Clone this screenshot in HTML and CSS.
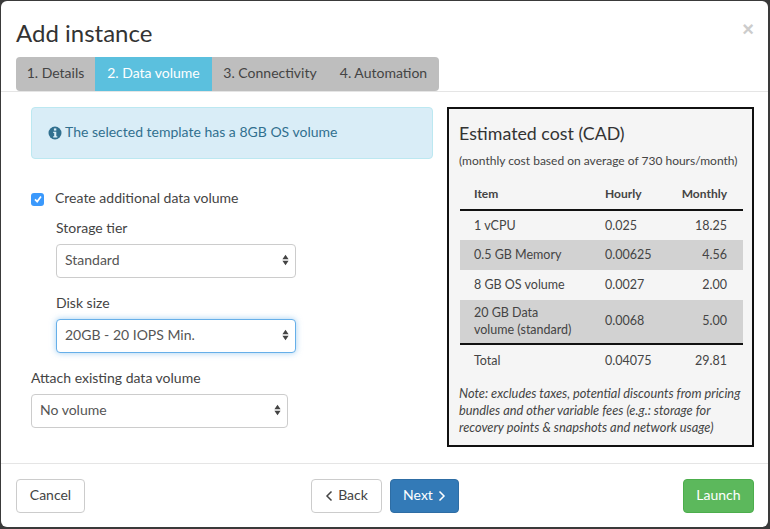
FILE: index.html
```html
<!DOCTYPE html>
<html lang="en">

<head>
    <meta charset="UTF-8">
    <title>Add instance</title>
    <link rel="stylesheet" href="styles.css">
</head>

<body>
    <div class="modal">
        <header class="modal-header">
            <div class="title-row">
                <h1>Add instance</h1>
                <button class="close">×</button>
            </div>
            <ul class="steps">
                <li class="step-1">1. Details</li>
                <li class="step-2 active">2. Data volume</li>
                <li class="step-3">3. Connectivity</li>
                <li class="step-4">4. Automation</li>
            </ul>
        </header>
        <main class="modal-body">
            <section class="form-col">
                <div class="alert">
                    <svg class="info-icon" viewBox="0 0 14 14" width="14" height="14">
                        <circle cx="7" cy="7" r="6.5" fill="#31708f" />
                        <rect x="5.9" y="2.4" width="2.4" height="2.2" fill="#d9edf7" />
                        <path d="M5.2 5.7h3.1v4.5h1v1.3H5.2v-1.3h1V7H5.2z" fill="#d9edf7" />
                    </svg>
                    <span class="alert-text">The selected template has a 8GB OS volume</span>
                </div>
                <label class="check-row">
                    <span class="check">
                        <svg viewBox="0 0 12 12" width="12" height="12">
                            <path d="M3 6.3l2.2 2.3L9 3.6" fill="none" stroke="#fff" stroke-width="1.7" />
                        </svg>
                    </span>
                    <span class="check-label">Create additional data volume</span>
                </label>
                <div class="nested">
                    <div class="field">
                        <label>Storage tier</label>
                        <div class="select">Standard
                            <svg class="arrows" viewBox="0 0 8 14" width="7" height="12">
                                <path d="M4 1l3.6 5H.4zM4 13L.4 8h7.2z" fill="#444" />
                            </svg>
                        </div>
                    </div>
                    <div class="field">
                        <label>Disk size</label>
                        <div class="select focused">20GB - 20 IOPS Min.
                            <svg class="arrows" viewBox="0 0 8 14" width="7" height="12">
                                <path d="M4 1l3.6 5H.4zM4 13L.4 8h7.2z" fill="#444" />
                            </svg>
                        </div>
                    </div>
                </div>
                <div class="field existing">
                    <label>Attach existing data volume</label>
                    <div class="select">No volume
                        <svg class="arrows" viewBox="0 0 8 14" width="7" height="12">
                            <path d="M4 1l3.6 5H.4zM4 13L.4 8h7.2z" fill="#444" />
                        </svg>
                    </div>
                </div>
            </section>
            <aside class="cost">
                <h2>Estimated cost (CAD)</h2>
                <p class="sub">(monthly cost based on average of 730 hours/month)</p>
                <table>
                    <thead>
                        <tr>
                            <th>Item</th>
                            <th>Hourly</th>
                            <th>Monthly</th>
                        </tr>
                    </thead>
                    <tbody>
                        <tr>
                            <td>1 vCPU</td>
                            <td>0.025</td>
                            <td>18.25</td>
                        </tr>
                        <tr class="shade">
                            <td>0.5 GB Memory</td>
                            <td>0.00625</td>
                            <td>4.56</td>
                        </tr>
                        <tr class="lift">
                            <td>8 GB OS volume</td>
                            <td>0.0027</td>
                            <td>2.00</td>
                        </tr>
                        <tr class="shade">
                            <td>20 GB Data<br>volume (standard)</td>
                            <td>0.0068</td>
                            <td>5.00</td>
                        </tr>
                    </tbody>
                    <tfoot>
                        <tr>
                            <td>Total</td>
                            <td>0.04075</td>
                            <td>29.81</td>
                        </tr>
                    </tfoot>
                </table>
                <p class="note">Note: excludes taxes, potential discounts from pricing bundles and other variable fees (e.g.: storage for recovery points &amp; snapshots and network usage)</p>
            </aside>
        </main>
        <footer class="modal-footer">
            <button class="btn btn-cancel">Cancel</button>
            <div class="nav-btns">
                <button class="btn btn-back">
                    <svg viewBox="0 0 8 12" width="8" height="12">
                        <path d="M6.5 1.5L2 6l4.5 4.5" fill="none" stroke="#444" stroke-width="1.5" />
                    </svg>
                    Back
                </button>
                <button class="btn btn-next">Next
                    <svg viewBox="0 0 8 12" width="8" height="12">
                        <path d="M1.5 1.5L6 6l-4.5 4.5" fill="none" stroke="#fff" stroke-width="1.5" />
                    </svg>
                </button>
            </div>
            <button class="btn btn-launch">Launch</button>
        </footer>
    </div>
</body>

</html>
```

FILE: styles.css
```css
* {
    box-sizing: border-box;
}

html,
body {
    height: 100%;
}

body {
    margin: 0;
    padding: 1px 2px 2px 1px;
    background-color: #3a3a3a;
    font-family: Lato, Arial, sans-serif;
    font-size: 14px;
    color: #444;
}

.modal {
    height: 526px;
    background-color: #fff;
    border-radius: 6px;
    display: flex;
    flex-direction: column;
}

.modal-header {
    height: 91px;
    padding: 0 14px 0 15px;
    border-bottom: 1px solid #e5e5e5;
}

.title-row {
    height: 56px;
    display: flex;
    justify-content: space-between;
    align-items: flex-start;
}

h1 {
    margin: 15px 0 0 0;
    font-size: 24px;
    font-weight: 400;
    line-height: 33px;
    color: #333;
}

.close {
    margin: 18px 0 0 0;
    padding: 0;
    border: none;
    background: none;
    font-family: Arial, sans-serif;
    font-size: 20px;
    font-weight: 700;
    line-height: 20px;
    color: #ccc;
}

.steps {
    list-style: none;
    margin: 0;
    padding: 0;
    display: inline-flex;
    height: 34px;
    background-color: #bebebe;
    border-radius: 4px;
    overflow: hidden;
}

.steps li {
    display: flex;
    align-items: center;
    justify-content: center;
    padding-bottom: 3px;
    color: #444;
}

.steps .active {
    background-color: #5bc0de;
    color: #fff;
}

.step-1 {
    width: 79px;
}

.step-2 {
    width: 117px;
}

.step-3 {
    width: 116px;
}

.step-4 {
    width: 111px;
}

.modal-body {
    flex: 1;
    padding: 15px 14px 15px 30px;
    display: flex;
    justify-content: space-between;
}

.form-col {
    width: 402px;
}

.alert {
    height: 52px;
    padding: 0 16px;
    display: flex;
    align-items: center;
    gap: 3px;
    background-color: #d9edf7;
    border: 1px solid #bce8f1;
    border-radius: 4px;
    color: #31708f;
}

.alert-text {
    padding-bottom: 4px;
}

.check-row {
    margin-top: 31px;
    height: 18px;
    display: flex;
    align-items: center;
    gap: 11px;
}

.check {
    width: 13px;
    height: 13px;
    display: flex;
    align-items: center;
    justify-content: center;
    background-color: #3b99fc;
    border-radius: 3px;
}

.check-label {
    padding-bottom: 4px;
}

.nested {
    padding-left: 25px;
    width: 290px;
}

.field {
    display: flex;
    flex-direction: column;
    width: 240px;
}

.field label {
    height: 18px;
    line-height: 18px;
    margin-bottom: 7px;
}

.nested .field {
    margin-top: 11px;
}

.nested .field+.field {
    margin-top: 16px;
}

.field.existing {
    width: 257px;
    margin-top: 16px;
}

.select {
    position: relative;
    height: 34px;
    padding: 0 8px 3px 8px;
    display: flex;
    align-items: center;
    background-color: #fff;
    border: 1px solid #ccc;
    border-radius: 4px;
    color: #555;
}

.select.focused {
    border-color: #66afe9;
    box-shadow: 0 0 6px rgba(102, 175, 233, 0.6);
}

.arrows {
    position: absolute;
    right: 6px;
    top: 9px;
}

.cost {
    width: 307px;
    height: 340px;
    padding: 14px 8px 0 10px;
    background-color: #f5f5f5;
    border: 2px solid #111;
}

h2 {
    margin: 0;
    font-size: 17.8px;
    font-weight: 400;
    line-height: 20px;
    color: #333;
}

.sub {
    margin: 10px 0 0 0;
    font-size: 12px;
    line-height: 16px;
}

table {
    width: 283px;
    margin: 10px 0 0 1px;
    border-collapse: collapse;
    font-size: 12.5px;
}

th,
td {
    padding: 0;
    line-height: 17px;
    text-align: left;
}

th {
    padding-bottom: 2px;
    font-size: 12px;
}

th:first-child,
td:first-child {
    padding-left: 14px;
    width: 145px;
}

th:last-child,
td:last-child {
    text-align: right;
    padding-right: 16px;
}

thead tr {
    height: 31px;
    border-bottom: 2px solid #111;
}

tbody tr {
    height: 30px;
}

tbody tr:last-child {
    height: 44px;
    border-bottom: 2px solid #111;
}

tfoot tr {
    height: 31px;
}

.shade {
    background-color: #d2d2d2;
}

.shade td,
.lift td {
    padding-bottom: 2px;
}

.note {
    margin: 10px 0 0 0;
    font-size: 12.8px;
    font-style: italic;
    line-height: 17px;
}

.modal-footer {
    height: 64px;
    padding: 15px 14px 0 15px;
    border-top: 1px solid #e5e5e5;
    display: flex;
    justify-content: space-between;
    align-items: flex-start;
}

.nav-btns {
    display: flex;
    gap: 8px;
    margin-left: 2px;
}

.btn {
    height: 34px;
    padding: 0 0 4px 0;
    display: flex;
    align-items: center;
    justify-content: center;
    gap: 5px;
    font-family: inherit;
    font-size: 14px;
    color: #444;
    background-color: #fff;
    border: 1px solid #ccc;
    border-radius: 4px;
}

.btn svg {
    margin-top: 3px;
}

.btn-cancel {
    width: 69px;
}

.btn-back {
    width: 71px;
}

.btn-next {
    width: 69px;
    background-color: #337ab7;
    border-color: #2e6da4;
    color: #fff;
}

.btn-launch {
    width: 71px;
    background-color: #5cb85c;
    border-color: #4cae4c;
    color: #fff;
}
```
